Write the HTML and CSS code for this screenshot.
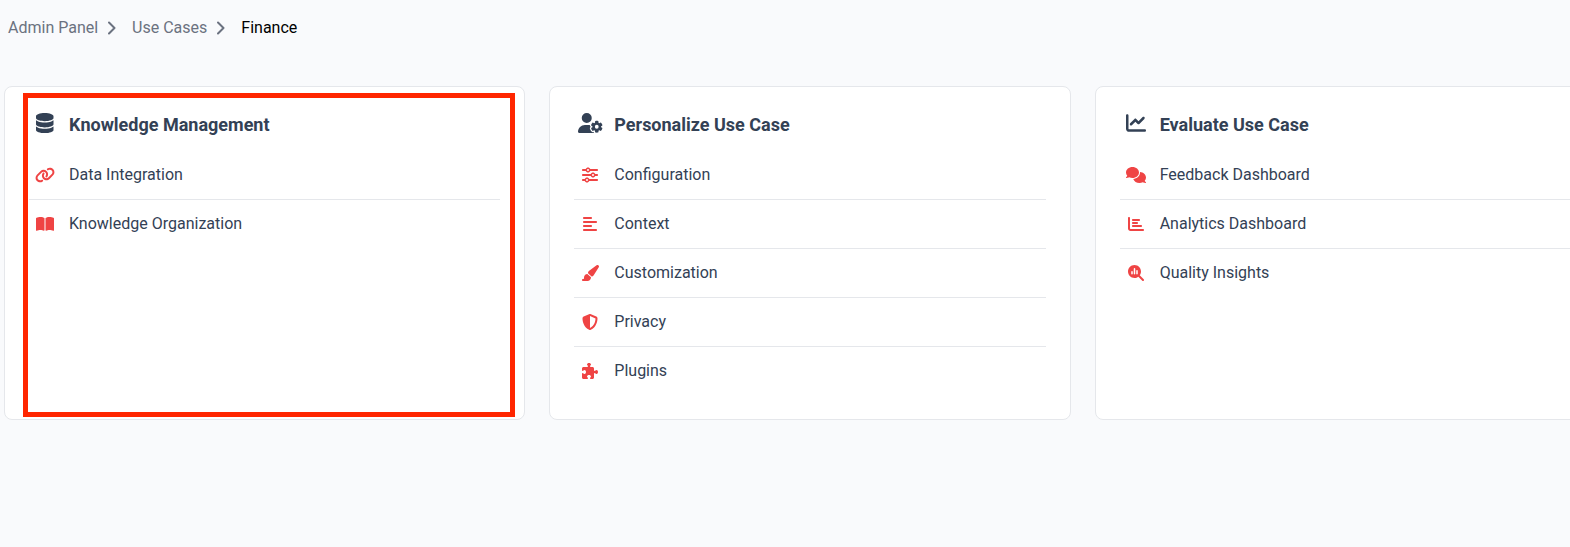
FILE: index.html
```html
<!DOCTYPE html>
<html lang="en">
<head>
    <meta charset="UTF-8">
    <meta name="viewport" content="width=device-width, initial-scale=1.0">
    <title>Finance - Use Cases</title>
    <link rel="stylesheet" href="styles.css">
</head>
<body>
    <nav class="breadcrumb" aria-label="Breadcrumb">
        <a href="#">Admin Panel</a>
        <svg class="chevron" viewBox="0 0 8 14"><path d="M1 1.5L6.5 7L1 12.5"/></svg>
        <a href="#">Use Cases</a>
        <svg class="chevron" viewBox="0 0 8 14"><path d="M1 1.5L6.5 7L1 12.5"/></svg>
        <a href="#" class="current" aria-current="page">Finance</a>
    </nav>

    <main class="cards">
        <section class="card highlighted">
            <h2>
                <span class="icon"><svg viewBox="0 0 448 512"><path d="M448 80v48c0 44.2-100.3 80-224 80S0 172.2 0 128V80C0 35.8 100.3 0 224 0S448 35.8 448 80zM393.2 214.7c20.8-7.4 39.9-16.9 54.8-28.6V288c0 44.2-100.3 80-224 80S0 332.2 0 288V186.1c14.9 11.8 34 21.2 54.8 28.6C99.7 230.7 159.5 240 224 240s124.3-9.3 169.2-25.3zM0 346.1c14.9 11.8 34 21.2 54.8 28.6C99.7 390.7 159.5 400 224 400s124.3-9.3 169.2-25.3c20.8-7.4 39.9-16.9 54.8-28.6V432c0 44.2-100.3 80-224 80S0 476.2 0 432V346.1z"/></svg></span>
                Knowledge Management
            </h2>
            <ul>
                <li><a href="#">
                    <span class="icon"><svg viewBox="0 0 640 512"><path d="M579.8 267.7c56.5-56.5 56.5-148 0-204.5c-50-50-128.8-56.5-186.3-15.4l-1.6 1.1c-14.4 10.3-17.7 30.3-7.4 44.6s30.3 17.7 44.6 7.4l1.6-1.1c32.1-22.9 76-19.3 103.8 8.6c31.5 31.5 31.5 82.5 0 114L422.3 334.8c-31.5 31.5-82.5 31.5-114 0c-27.9-27.9-31.5-71.8-8.6-103.8l1.1-1.6c10.3-14.4 6.9-34.4-7.4-44.6s-34.4-6.9-44.6 7.4l-1.1 1.6C206.5 251.2 213 330 263 380c56.5 56.5 148 56.5 204.5 0L579.8 267.7zM60.2 244.3c-56.5 56.5-56.5 148 0 204.5c50 50 128.8 56.5 186.3 15.4l1.6-1.1c14.4-10.3 17.7-30.3 7.4-44.6s-30.3-17.7-44.6-7.4l-1.6 1.1c-32.1 22.9-76 19.3-103.8-8.6C74 372 74 321 105.5 289.5L217.7 177.2c31.5-31.5 82.5-31.5 114 0c27.9 27.9 31.5 71.8 8.6 103.9l-1.1 1.6c-10.3 14.4-6.9 34.4 7.4 44.6s34.4 6.9 44.6-7.4l1.1-1.6C433.5 260.8 427 182 377 132c-56.5-56.5-148-56.5-204.5 0L60.2 244.3z"/></svg></span>
                    Data Integration
                </a></li>
                <li><a href="#">
                    <span class="icon"><svg viewBox="0 0 576 512"><path d="M249.6 471.5c10.8 3.8 22.4-4.1 22.4-15.5V78.6c0-4.2-1.6-8.4-5-11C247.4 52 202.4 32 144 32C93.5 32 46.3 45.3 18.1 56.1C6.8 60.5 0 71.7 0 83.8V454.1c0 11.9 12.8 20.2 24.1 16.5C55.6 460.1 105.5 448 144 448c33.9 0 79 14 105.6 23.5zm76.8 0C353 462 398.1 448 432 448c38.5 0 88.4 12.1 119.9 22.6c11.3 3.8 24.1-4.6 24.1-16.5V83.8c0-12.1-6.8-23.3-18.1-27.6C529.7 45.3 482.5 32 432 32c-58.4 0-103.4 20-123 35.6c-3.3 2.6-5 6.8-5 11V456c0 11.4 11.7 19.3 22.4 15.5z"/></svg></span>
                    Knowledge Organization
                </a></li>
            </ul>
        </section>

        <section class="card">
            <h2>
                <span class="icon"><svg viewBox="0 0 640 512"><path d="M224 0a128 128 0 1 1 0 256A128 128 0 1 1 224 0zM178.3 304h91.4c11.8 0 23.4 1.2 34.5 3.3c-2.1 18.5 7.4 35.6 21.8 44.8c-16.6 10.6-26.7 31.6-20 53.3c4 12.9 9.4 25.5 16.4 37.6s15.2 23.1 24.4 33c15.7 16.9 39.6 18.4 57.2 8.7v.9c0 9.2 2.7 18.5 7.9 26.3H29.7C13.3 512 0 498.7 0 482.3C0 383.8 79.8 304 178.3 304zM436 218.2c0-7 4.5-13.3 11.3-14.8c10.5-2.4 21.5-3.7 32.7-3.7s22.2 1.3 32.7 3.7c6.8 1.5 11.3 7.8 11.3 14.8v30.6c7.9 3.4 15.4 7.7 22.3 12.8l24.9-14.3c6.1-3.5 13.7-2.7 18.5 2.4c7.6 8.1 14.3 17.2 20.1 27.2s10.3 20.4 13.5 31c2.1 6.7-1.1 13.7-7.2 17.2l-25 14.4c.4 4 .7 8.1 .7 12.3s-.2 8.2-.7 12.3l25 14.4c6.1 3.5 9.2 10.5 7.2 17.2c-3.3 10.6-7.8 21-13.5 31s-12.5 19.1-20.1 27.2c-4.8 5.1-12.5 5.9-18.5 2.4l-24.9-14.3c-6.9 5.1-14.3 9.4-22.3 12.8l0 30.6c0 7-4.5 13.3-11.3 14.8c-10.5 2.4-21.5 3.7-32.7 3.7s-22.2-1.3-32.7-3.7c-6.8-1.5-11.3-7.8-11.3-14.8V454.8c-8-3.4-15.6-7.7-22.5-12.9l-24.7 14.3c-6.1 3.5-13.7 2.7-18.5-2.4c-7.6-8.1-14.3-17.2-20.1-27.2s-10.3-20.4-13.5-31c-2.1-6.7 1.1-13.7 7.2-17.2l24.8-14.3c-.4-4.1-.7-8.2-.7-12.4s.2-8.3 .7-12.4L343.8 325c-6.1-3.5-9.2-10.5-7.2-17.2c3.3-10.6 7.7-21 13.5-31s12.5-19.1 20.1-27.2c4.8-5.1 12.4-5.9 18.5-2.4l24.8 14.3c6.9-5.1 14.5-9.4 22.5-12.9V218.2zm92.1 133.5a48.1 48.1 0 1 0 -96.1 0 48.1 48.1 0 1 0 96.1 0z"/></svg></span>
                Personalize Use Case
            </h2>
            <ul>
                <li><a href="#">
                    <span class="icon"><svg viewBox="0 0 512 512"><path d="M0 416c0 17.7 14.3 32 32 32l54.7 0c12.3 28.3 40.5 48 73.3 48s61-19.7 73.3-48L480 448c17.7 0 32-14.3 32-32s-14.3-32-32-32l-246.7 0c-12.3-28.3-40.5-48-73.3-48s-61 19.7-73.3 48L32 384c-17.7 0-32 14.3-32 32zm128 0a32 32 0 1 1 64 0 32 32 0 1 1 -64 0zM320 256a32 32 0 1 1 64 0 32 32 0 1 1 -64 0zm32-80c-32.8 0-61 19.7-73.3 48L32 224c-17.7 0-32 14.3-32 32s14.3 32 32 32l246.7 0c12.3 28.3 40.5 48 73.3 48s61-19.7 73.3-48l54.7 0c17.7 0 32-14.3 32-32s-14.3-32-32-32l-54.7 0c-12.3-28.3-40.5-48-73.3-48zM192 128a32 32 0 1 1 0-64 32 32 0 1 1 0 64zm73.3-64C253 35.7 224.8 16 192 16s-61 19.7-73.3 48L32 64C14.3 64 0 78.3 0 96s14.3 32 32 32l86.7 0c12.3 28.3 40.5 48 73.3 48s61-19.7 73.3-48L480 128c17.7 0 32-14.3 32-32s-14.3-32-32-32L265.3 64z"/></svg></span>
                    Configuration
                </a></li>
                <li><a href="#">
                    <span class="icon"><svg viewBox="0 0 448 512"><path d="M288 64c0 17.7-14.3 32-32 32H32C14.3 96 0 81.7 0 64S14.3 32 32 32H256c17.7 0 32 14.3 32 32zm0 256c0 17.7-14.3 32-32 32H32c-17.7 0-32-14.3-32-32s14.3-32 32-32H256c17.7 0 32 14.3 32 32zM0 192c0-17.7 14.3-32 32-32H416c17.7 0 32 14.3 32 32s-14.3 32-32 32H32c-17.7 0-32-14.3-32-32zM448 448c0 17.7-14.3 32-32 32H32c-17.7 0-32-14.3-32-32s14.3-32 32-32H416c17.7 0 32 14.3 32 32z"/></svg></span>
                    Context
                </a></li>
                <li><a href="#">
                    <span class="icon"><svg viewBox="0 0 576 512"><path d="M339.3 367.1c27.3-3.9 51.9-19.4 67.2-42.9L568.2 74.1c12.6-19.5 9.4-45.3-7.6-61.2S517.7-4.4 499.1 9.6L262.4 187.2c-24 18-38.2 46.1-38.4 76.1L339.3 367.1zm-19.6 25.4l-116-104.4C143.9 290.3 96 339.6 96 400c0 3.9 .2 7.8 .6 11.6C98.4 429.1 86.4 448 68.8 448H64c-17.7 0-32 14.3-32 32s14.3 32 32 32H208c61.9 0 112-50.1 112-112c0-2.5-.1-5-.2-7.5z"/></svg></span>
                    Customization
                </a></li>
                <li><a href="#">
                    <span class="icon"><svg viewBox="0 0 512 512"><path d="M256 0c4.6 0 9.2 1 13.4 2.9L457.7 82.8c22 9.3 38.4 31 38.3 57.2c-.5 99.2-41.3 280.7-213.6 363.2c-16.7 8-36.1 8-52.8 0C57.3 420.7 16.5 239.2 16 140c-.1-26.2 16.3-47.9 38.3-57.2L242.7 2.9C246.8 1 251.4 0 256 0zm0 66.8V444.8C394 378 431.1 230.1 432 141.4L256 66.8l0 0z"/></svg></span>
                    Privacy
                </a></li>
                <li><a href="#">
                    <span class="icon"><svg viewBox="0 0 512 512"><path d="M192 104.8c0-9.2-5.8-17.3-13.2-22.8C167.2 73.3 160 61.3 160 48c0-26.5 28.7-48 64-48s64 21.5 64 48c0 13.3-7.2 25.3-18.8 34c-7.4 5.5-13.2 13.6-13.2 22.8v0c0 12.8 10.4 23.2 23.2 23.2H336c26.5 0 48 21.5 48 48v56.8c0 12.8 10.4 23.2 23.2 23.2v0c9.2 0 17.3-5.8 22.8-13.2c8.7-11.6 20.7-18.8 34-18.8c26.5 0 48 28.7 48 64s-21.5 64-48 64c-13.3 0-25.3-7.2-34-18.8c-5.5-7.4-13.6-13.2-22.8-13.2v0c-12.8 0-23.2 10.4-23.2 23.2V464c0 26.5-21.5 48-48 48H279.2c-12.8 0-23.2-10.4-23.2-23.2v0c0-9.2 5.8-17.3 13.2-22.8c11.6-8.7 18.8-20.7 18.8-34c0-26.5-28.7-48-64-48s-64 21.5-64 48c0 13.3 7.2 25.3 18.8 34c7.4 5.5 13.2 13.6 13.2 22.8v0c0 12.8-10.4 23.2-23.2 23.2H48c-26.5 0-48-21.5-48-48V343.2C0 330.4 10.4 320 23.2 320v0c9.2 0 17.3 5.8 22.8 13.2C54.7 344.8 66.7 352 80 352c26.5 0 48-28.7 48-64s-21.5-64-48-64c-13.3 0-25.3 7.2-34 18.8C40.5 250.2 32.4 256 23.2 256v0C10.4 256 0 245.6 0 232.8V176c0-26.5 21.5-48 48-48H168.8c12.8 0 23.2-10.4 23.2-23.2v0z"/></svg></span>
                    Plugins
                </a></li>
            </ul>
        </section>

        <section class="card">
            <h2>
                <span class="icon"><svg viewBox="0 0 512 512"><path d="M64 64c0-17.7-14.3-32-32-32S0 46.3 0 64V400c0 44.2 35.8 80 80 80H480c17.7 0 32-14.3 32-32s-14.3-32-32-32H80c-8.8 0-16-7.2-16-16V64zm406.6 86.6c12.5-12.5 12.5-32.8 0-45.3s-32.8-12.5-45.3 0L320 210.7l-57.4-57.4c-12.5-12.5-32.8-12.5-45.3 0l-112 112c-12.5 12.5-12.5 32.8 0 45.3s32.8 12.5 45.3 0L240 221.3l57.4 57.4c12.5 12.5 32.8 12.5 45.3 0l128-128z"/></svg></span>
                Evaluate Use Case
            </h2>
            <ul>
                <li><a href="#">
                    <span class="icon"><svg viewBox="0 0 640 512"><path d="M208 352c114.9 0 208-78.8 208-176S322.9 0 208 0S0 78.8 0 176c0 38.6 14.7 74.3 39.6 103.4c-3.5 9.4-8.7 17.7-14.2 24.7c-4.8 6.2-9.7 11-13.3 14.3c-1.8 1.6-3.3 2.9-4.3 3.7c-.5 .4-.9 .7-1.1 .8l-.2 .2 0 0 0 0C1 327.2-1.4 334.4 .8 340.9S9.1 352 16 352c21.8 0 43.8-5.6 62.1-12.5c9.2-3.5 17.8-7.4 25.3-11.4C134.1 343.3 169.8 352 208 352zM448 176c0 112.3-99.1 196.9-216.5 207C255.8 457.4 336.4 512 432 512c38.2 0 73.9-8.7 104.7-23.9c7.5 4 16 7.9 25.2 11.4c18.3 6.9 40.3 12.5 62.1 12.5c6.9 0 13.1-4.5 15.2-11.1c2.1-6.6-.2-13.8-5.8-17.9l0 0 0 0-.2-.2c-.2-.2-.6-.4-1.1-.8c-1-.8-2.5-2-4.3-3.7c-3.6-3.3-8.5-8.1-13.3-14.3c-5.5-7-10.7-15.4-14.2-24.7c24.9-29 39.6-64.7 39.6-103.4c0-92.8-84.9-168.9-192.6-175.5c.4 5.1 .6 10.3 .6 15.5z"/></svg></span>
                    Feedback Dashboard
                </a></li>
                <li><a href="#">
                    <span class="icon"><svg viewBox="0 0 512 512"><path d="M32 32c17.7 0 32 14.3 32 32V400c0 8.8 7.2 16 16 16H480c17.7 0 32 14.3 32 32s-14.3 32-32 32H80c-44.2 0-80-35.8-80-80V64C0 46.3 14.3 32 32 32zm96 96c0-17.7 14.3-32 32-32l192 0c17.7 0 32 14.3 32 32s-14.3 32-32 32l-192 0c-17.7 0-32-14.3-32-32zm32 64H288c17.7 0 32 14.3 32 32s-14.3 32-32 32H160c-17.7 0-32-14.3-32-32s14.3-32 32-32zm0 96H416c17.7 0 32 14.3 32 32s-14.3 32-32 32H160c-17.7 0-32-14.3-32-32s14.3-32 32-32z"/></svg></span>
                    Analytics Dashboard
                </a></li>
                <li><a href="#">
                    <span class="icon"><svg viewBox="0 0 512 512"><path d="M416 208c0 45.9-14.9 88.3-40 122.7L502.6 457.4c12.5 12.5 12.5 32.8 0 45.3s-32.8 12.5-45.3 0L330.7 376c-34.4 25.2-76.8 40-122.7 40C93.1 416 0 322.9 0 208S93.1 0 208 0S416 93.1 416 208zm-312 8v64c0 13.3 10.7 24 24 24s24-10.7 24-24V216c0-13.3-10.7-24-24-24s-24 10.7-24 24zm80-96V280c0 13.3 10.7 24 24 24s24-10.7 24-24V120c0-13.3-10.7-24-24-24s-24 10.7-24 24zm80 64v96c0 13.3 10.7 24 24 24s24-10.7 24-24V184c0-13.3-10.7-24-24-24s-24 10.7-24 24z"/></svg></span>
                    Quality Insights
                </a></li>
            </ul>
        </section>
    </main>
</body>
</html>
```
FILE: styles.css
```css
/* General Reset */
* {
    margin: 0;
    padding: 0;
    box-sizing: border-box;
}

body {
    font-family: Roboto, 'Liberation Sans', sans-serif;
    font-size: 16px;
    line-height: 24px;
    background-color: #f9fafc;
    color: #334155;
    overflow: hidden;
}

a {
    color: inherit;
    text-decoration: none;
}

/* Breadcrumb */
.breadcrumb {
    display: flex;
    align-items: center;
    padding: 16px 8px;
    color: #6b7280;
}

.breadcrumb .current {
    color: #000000;
}

.chevron {
    width: 8px;
    height: 14px;
    margin: 0 16px 0 10px;
    fill: none;
    stroke: #6b7280;
    stroke-width: 2;
    stroke-linecap: round;
    stroke-linejoin: round;
}

/* Cards, the row runs past the right edge of the window */
.cards {
    display: grid;
    grid-template-columns: repeat(3, 1fr);
    gap: 24px;
    margin: 30px -46px 0 4px;
}

.card {
    position: relative;
    padding: 24px;
    background-color: #ffffff;
    border: 1px solid #e5e7eb;
    border-radius: 8px;
}

.card h2 {
    display: flex;
    align-items: center;
    gap: 8px;
    margin-bottom: 12px;
    font-size: 18px;
    font-weight: 700;
    line-height: 28px;
}

.card ul {
    list-style: none;
}

.card li + li {
    border-top: 1px solid #e5e7eb;
}

.card li a {
    display: flex;
    align-items: center;
    gap: 8px;
    padding: 12px 0;
}

/* Icons */
.icon {
    display: flex;
    justify-content: center;
    width: 32px;
}

.icon svg {
    height: 16px;
    fill: #ef4444;
}

.card h2 svg {
    height: 20px;
    margin-bottom: 4px;
    fill: #334155;
}

/* Red frame over the first card */
.highlighted::after {
    content: '';
    position: absolute;
    top: 6px;
    right: 9px;
    bottom: 2px;
    left: 18px;
    border: 5px solid #ff2600;
    pointer-events: none;
}
```
